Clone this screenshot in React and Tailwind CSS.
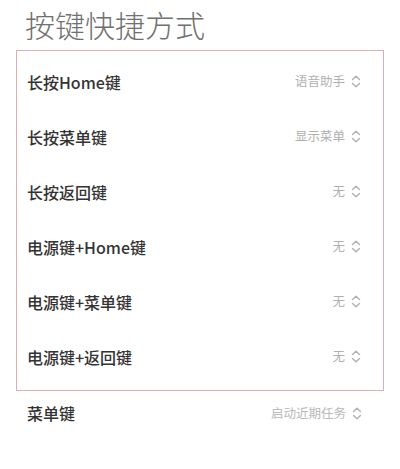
const rows = [
    { label: '长按Home键', value: '语音助手' },
    { label: '长按菜单键', value: '显示菜单' },
    { label: '长按返回键', value: '无' },
    { label: '电源键+Home键', value: '无' },
    { label: '电源键+菜单键', value: '无' },
    { label: '电源键+返回键', value: '无' },
];

// small up/down chevron used by every picker row
function UpDown() {
    return (
        <svg width="10" height="13" viewBox="0 0 10 13" fill="none" stroke="#b0b0b0" strokeWidth="1.4" strokeLinecap="round" strokeLinejoin="round">
            <path d="M1.5 4.5 L5 1.2 L8.5 4.5" />
            <path d="M1.5 8.5 L5 11.8 L8.5 8.5" />
        </svg>
    );
}

function Row({ label, value }) {
    return (
        <div className="flex items-center justify-between h-[55px] pl-[10px] pr-[22px]">
            <span className="text-[16px] font-medium text-[#333]">{label}</span>
            <span className="flex items-center gap-[6px] text-[12.5px] text-[#b0b0b0]">
                {value}
                <UpDown />
            </span>
        </div>
    );
}

export default function App() {
    return (
        <div
            className="w-[400px] h-[469px] bg-white overflow-hidden"
            style={{ fontFamily: '"Noto Sans CJK SC", "Noto Sans", sans-serif' }}
        >
            <h1 className="pl-[25px] pt-[4px] h-[50px] text-[30px] leading-[40px] font-light text-[#707070]">
                按键快捷方式
            </h1>
            <div className="mx-[16px] w-[368px] border border-[#dcb0b0] pt-[3px] pb-[6px]">
                {rows.map((r) => (
                    <Row key={r.label} label={r.label} value={r.value} />
                ))}
            </div>
            <div className="flex items-center justify-between h-[44px] pl-[27px] pr-[38px]">
                <span className="text-[16px] font-medium text-[#333]">菜单键</span>
                <span className="flex items-center gap-[6px] text-[12.5px] text-[#b8b8b8]">
                    启动近期任务
                    <UpDown />
                </span>
            </div>
        </div>
    );
}
